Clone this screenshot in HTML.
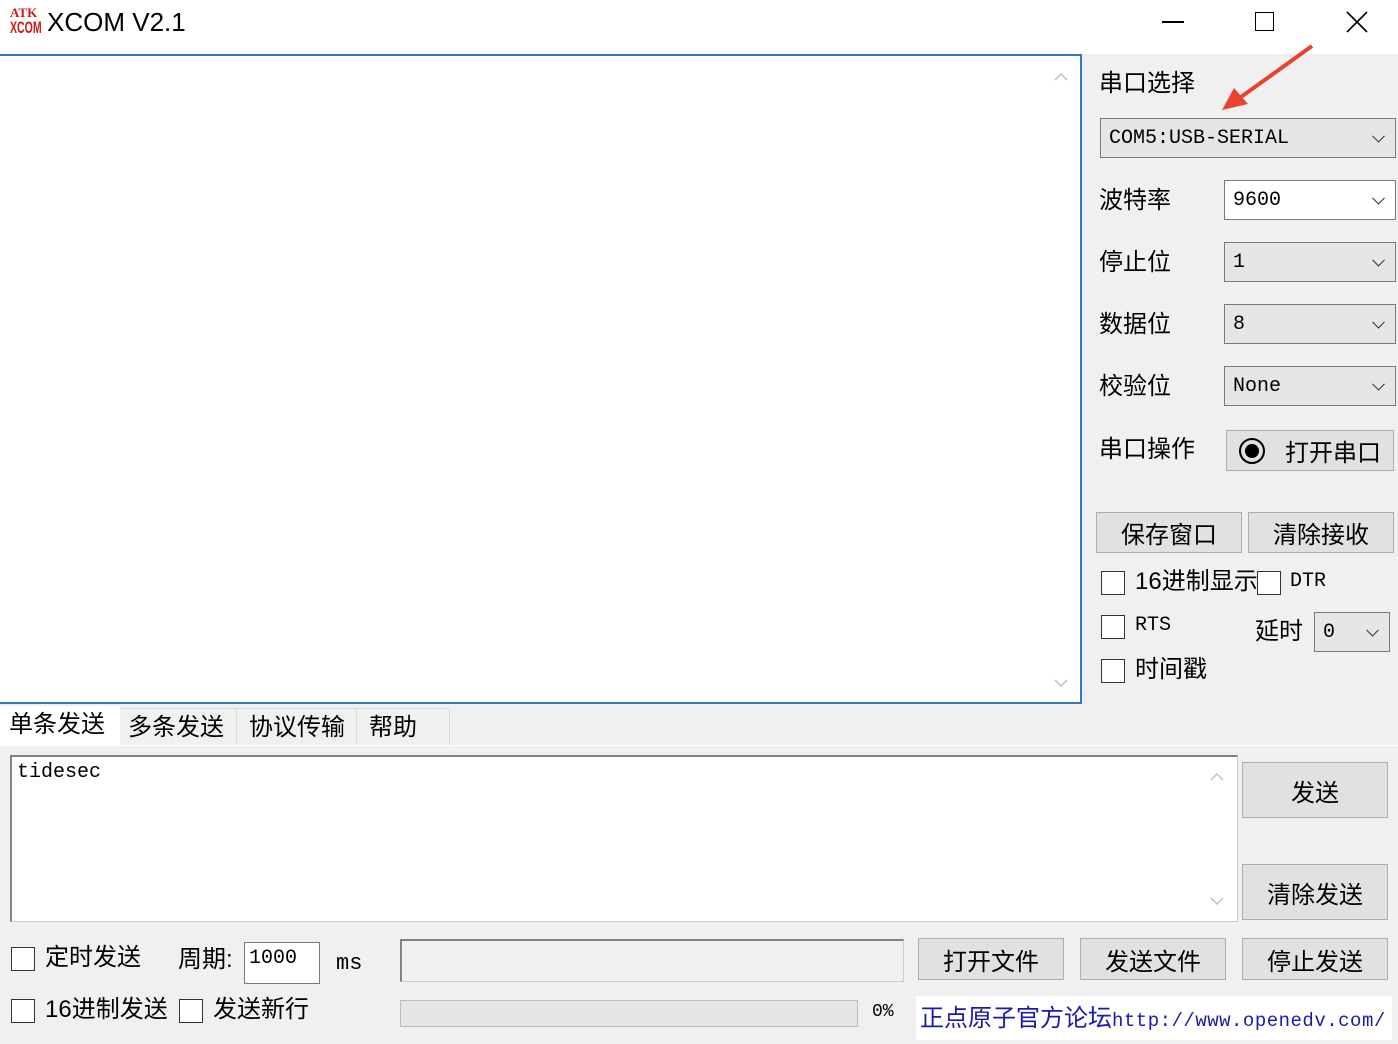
<!DOCTYPE html>
<html><head><meta charset="utf-8"><style>
*{margin:0;padding:0;box-sizing:border-box}
body{width:1398px;height:1044px;background:#f0f0f0;position:relative;overflow:hidden;font-family:"Liberation Sans","Noto Sans CJK SC",sans-serif;color:#000}
.a{position:absolute}
.t{font-size:24px;line-height:28px;white-space:nowrap}
.m{font-family:"Liberation Mono","Noto Sans CJK SC",monospace}
.cb{position:absolute;border:1px solid #7a7a7a;background:#e6e6e6;display:flex;align-items:center;padding-left:8px;font-size:20px}
.cb.w{background:#fff}
.cb::after{content:"";position:absolute;right:12px;top:50%;width:8px;height:8px;border-right:1.5px solid #333;border-bottom:1.5px solid #333;transform:translateY(-70%) rotate(45deg)}
.btn{position:absolute;border:1px solid #adadad;background:#e1e1e1;display:flex;align-items:center;justify-content:center;font-size:24px}
.chk{position:absolute;width:24px;height:24px;border:1.5px solid #333;background:#fff}
</style></head><body>
<div class="a" style="left:0;top:0;width:1398px;height:54px;background:#fff"></div>
<div class="a" style="left:10px;top:6px;font:bold 13px 'Liberation Serif',serif;color:#d01818;line-height:13px">ATK</div>
<div class="a" style="left:10px;top:19px;font:bold 17px 'Liberation Sans',sans-serif;color:#d01818;line-height:18px;transform:scaleX(0.62);transform-origin:left top">XCOM</div>
<div class="a" style="left:47px;top:6px;font-size:26px;line-height:32px">XCOM V2.1</div>
<div class="a" style="left:1162px;top:21px;width:22px;height:1.5px;background:#000"></div>
<div class="a" style="left:1255px;top:12px;width:19px;height:19px;border:1.5px solid #000"></div>
<svg class="a" style="left:1346px;top:11px" width="22" height="22"><path d="M1 1L21 21M21 1L1 21" stroke="#000" stroke-width="1.6"/></svg>

<div class="a" style="left:0;top:54px;width:1082px;height:650px;border:2px solid #2f78c4;border-left:none;background:#fff"></div>
<svg class="a" style="left:1054px;top:72px" width="14" height="10"><path d="M1 8L7 2L13 8" fill="none" stroke="#c0c0c0" stroke-width="1.5"/></svg>
<svg class="a" style="left:1054px;top:678px" width="14" height="10"><path d="M1 2L7 8L13 2" fill="none" stroke="#c0c0c0" stroke-width="1.5"/></svg>

<div class="a t" style="left:1099px;top:70px">串口选择</div>
<svg class="a" style="left:1218px;top:42px" width="100" height="72"><path d="M94 4L16 60" stroke="#e8432e" stroke-width="4"/><path d="M4 68L16 46L30 62Z" fill="#e8432e"/></svg>
<div class="cb m" style="left:1100px;top:118px;width:296px;height:40px">COM5:USB-SERIAL</div>
<div class="a t" style="left:1099px;top:187px">波特率</div>
<div class="cb w m" style="left:1224px;top:180px;width:172px;height:40px">9600</div>
<div class="a t" style="left:1099px;top:249px">停止位</div>
<div class="cb m" style="left:1224px;top:242px;width:172px;height:40px">1</div>
<div class="a t" style="left:1099px;top:311px">数据位</div>
<div class="cb m" style="left:1224px;top:304px;width:172px;height:40px">8</div>
<div class="a t" style="left:1099px;top:373px">校验位</div>
<div class="cb m" style="left:1224px;top:366px;width:172px;height:40px">None</div>
<div class="a t" style="left:1099px;top:436px">串口操作</div>
<div class="btn" style="left:1226px;top:430px;width:168px;height:41px;justify-content:flex-start;padding-left:12px"><span style="display:inline-block;width:26px;height:26px;border:2px solid #000;border-radius:50%;position:relative;margin-right:20px"><span style="position:absolute;left:4px;top:4px;width:14px;height:14px;background:#000;border-radius:50%"></span></span>打开串口</div>
<div class="btn" style="left:1096px;top:512px;width:146px;height:41px">保存窗口</div>
<div class="btn" style="left:1248px;top:512px;width:146px;height:41px">清除接收</div>
<div class="chk" style="left:1101px;top:571px"></div>
<div class="a t" style="left:1135px;top:568px">16进制显示</div>
<div class="chk" style="left:1257px;top:571px"></div>
<div class="a t m" style="left:1290px;top:568px;font-size:20px">DTR</div>
<div class="chk" style="left:1101px;top:615px"></div>
<div class="a t m" style="left:1135px;top:612px;font-size:20px">RTS</div>
<div class="a t" style="left:1255px;top:618px">延时</div>
<div class="cb m" style="left:1314px;top:612px;width:76px;height:40px">0</div>
<div class="chk" style="left:1101px;top:659px"></div>
<div class="a t" style="left:1135px;top:656px">时间戳</div>

<div class="a" style="left:118px;top:708px;width:332px;height:38px;background:#f0f0f0;border:1px solid #d9d9d9"></div>
<div class="a" style="left:0;top:706px;width:120px;height:40px;background:#fff"></div>
<div class="a t" style="left:9px;top:711px">单条发送</div>
<div class="a" style="left:236px;top:710px;width:1px;height:34px;background:#d9d9d9"></div>
<div class="a" style="left:356px;top:710px;width:1px;height:34px;background:#d9d9d9"></div>
<div class="a t" style="left:128px;top:714px">多条发送</div>
<div class="a t" style="left:249px;top:714px">协议传输</div>
<div class="a t" style="left:369px;top:714px">帮助</div>
<div class="a" style="left:0;top:745px;width:1398px;height:1px;background:#fff"></div>

<div class="a" style="left:10px;top:755px;width:1228px;height:167px;border:2px solid #828282;border-right:1px solid #ccc;border-bottom:1px solid #ccc;background:#fff"></div>
<div class="a m" style="left:17px;top:761px;font-size:20px">tidesec</div>
<svg class="a" style="left:1210px;top:772px" width="14" height="10"><path d="M1 8L7 2L13 8" fill="none" stroke="#c0c0c0" stroke-width="1.5"/></svg>
<svg class="a" style="left:1210px;top:896px" width="14" height="10"><path d="M1 2L7 8L13 2" fill="none" stroke="#c0c0c0" stroke-width="1.5"/></svg>
<div class="btn" style="left:1242px;top:762px;width:146px;height:56px">发送</div>
<div class="btn" style="left:1242px;top:864px;width:146px;height:56px">清除发送</div>

<div class="chk" style="left:11px;top:947px"></div>
<div class="a t" style="left:45px;top:944px">定时发送</div>
<div class="a t" style="left:178px;top:946px">周期:</div>
<div class="a m" style="left:244px;top:942px;width:76px;height:42px;background:#fff;border:1px solid #7a7a7a;font-size:20px;padding:4px 4px">1000</div>
<div class="a t m" style="left:336px;top:950px;font-size:22px">ms</div>
<div class="a" style="left:400px;top:939px;width:504px;height:43px;border:2px solid #828282;border-right:1px solid #ccc;border-bottom:1px solid #ccc;background:#f0f0f0"></div>
<div class="btn" style="left:918px;top:938px;width:146px;height:42px">打开文件</div>
<div class="btn" style="left:1080px;top:938px;width:146px;height:42px">发送文件</div>
<div class="btn" style="left:1242px;top:938px;width:146px;height:42px">停止发送</div>
<div class="chk" style="left:11px;top:999px"></div>
<div class="a t" style="left:45px;top:996px">16进制发送</div>
<div class="chk" style="left:179px;top:999px"></div>
<div class="a t" style="left:213px;top:996px">发送新行</div>
<div class="a" style="left:400px;top:1000px;width:458px;height:27px;border:1px solid #bcbcbc;background:#e6e6e6"></div>
<div class="a m" style="left:872px;top:1002px;font-size:18px">0%</div>
<div class="a" style="left:916px;top:996px;width:476px;height:44px;background:#fff"></div>
<div class="a t" style="left:920px;top:1005px;color:#1a1aa8">正点原子官方论坛<span class="m" style="font-size:19px;letter-spacing:0.5px">http://www.openedv.com/</span></div>
</body></html>
